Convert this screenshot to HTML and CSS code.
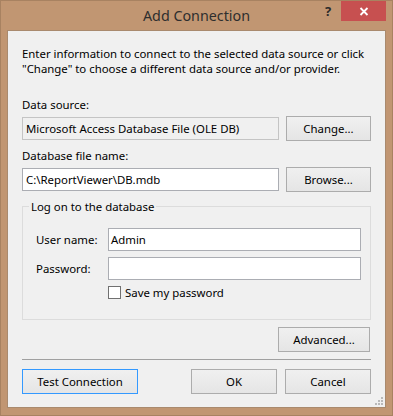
FILE: index.html
```html
<!DOCTYPE html>
<html lang="en">
<head>
  <meta charset="UTF-8">
  <title>Add Connection</title>
  <link rel="stylesheet" href="styles.css">
</head>
<body>
  <div class="window">
    <div class="titlebar">
      <span></span>
      <span class="title">Add Connection</span>
      <div class="caption-buttons">
        <span class="help">?</span>
        <span class="close">
          <svg width="10" height="9" viewBox="0 0 10 9">
            <path d="M1.5 1 L8.5 8 M8.5 1 L1.5 8" stroke="#fff" stroke-width="1.8" fill="none"/>
          </svg>
        </span>
      </div>
    </div>

    <div class="client">
      <p class="intro">Enter information to connect to the selected data source or click<br>"Change" to choose a different data source and/or provider.</p>

      <div class="label first">Data source:</div>
      <div class="row">
        <div class="textbox readonly">Microsoft Access Database File (OLE DB)</div>
        <button class="btn">Change...</button>
      </div>

      <div class="label">Database file name:</div>
      <div class="row">
        <div class="textbox">C:\ReportViewer\DB.mdb</div>
        <button class="btn">Browse...</button>
      </div>

      <fieldset class="group">
        <legend>Log on to the database</legend>
        <div class="field">
          <span class="field-name">User name:</span>
          <div class="textbox wide">Admin</div>
        </div>
        <div class="field">
          <span class="field-name">Password:</span>
          <div class="textbox wide"></div>
        </div>
        <label class="check">
          <span class="box"></span>
          <span>Save my password</span>
        </label>
      </fieldset>

      <button class="btn advanced">Advanced...</button>

      <div class="separator"></div>

      <div class="footer">
        <button class="btn default">Test Connection</button>
        <div class="footer-right">
          <button class="btn">OK</button>
          <button class="btn">Cancel</button>
        </div>
      </div>

      <svg class="grip" width="8" height="8" viewBox="0 0 8 8">
        <rect x="6" y="0" width="2" height="2" fill="#b9b9b9"/>
        <rect x="3" y="3" width="2" height="2" fill="#b9b9b9"/>
        <rect x="6" y="3" width="2" height="2" fill="#b9b9b9"/>
        <rect x="0" y="6" width="2" height="2" fill="#b9b9b9"/>
        <rect x="3" y="6" width="2" height="2" fill="#b9b9b9"/>
        <rect x="6" y="6" width="2" height="2" fill="#b9b9b9"/>
      </svg>
    </div>
  </div>
</body>
</html>
```

FILE: styles.css
```css
body {
  margin: 0;
  font-family: 'Noto Sans', sans-serif;
  font-size: 11.4px;
  color: #000;
}

.window {
  box-sizing: border-box;
  width: 393px;
  height: 416px;
  border: 1px solid #a88261;
  background: #c19672;
  padding: 0 6px 7px 6px;
  display: flex;
  flex-direction: column;
}

/* Title bar */
.titlebar {
  height: 29px;
  display: grid;
  grid-template-columns: 1fr auto 1fr;
}

.title {
  font-size: 14.3px;
  line-height: 29px;
  color: #2e2e2e;
}

.caption-buttons {
  display: flex;
  justify-content: flex-end;
  align-items: flex-start;
}

.help {
  width: 14px;
  margin-right: 6px;
  text-align: center;
  font-weight: 700;
  font-size: 13px;
  line-height: 20px;
  color: #2b2b2b;
}

.close {
  width: 45px;
  height: 20px;
  background: #c75050;
  display: flex;
  align-items: center;
  justify-content: center;
}

/* Client area */
.client {
  flex: 1;
  position: relative;
  background: #f0f0f0;
  border: 1px solid #a98a6e;
  padding: 15px 14px 0 14px;
  display: flex;
  flex-direction: column;
}

.intro {
  margin: 0;
  line-height: 15px;
}

.label {
  line-height: 15px;
  margin-top: 7px;
}

.label.first {
  margin-top: 21px;
}

.row {
  display: flex;
  align-items: center;
  justify-content: space-between;
  margin-top: 4px;
}

.textbox {
  box-sizing: border-box;
  width: 257px;
  height: 23px;
  border: 1px solid #abadb3;
  background: #fff;
  padding: 0 3px;
  line-height: 21px;
  white-space: nowrap;
}

.textbox.readonly {
  background: #f0f0f0;
  border-color: #c4c4c4;
}

.btn {
  box-sizing: border-box;
  width: 85px;
  height: 25px;
  border: 1px solid #acacac;
  background: linear-gradient(#f0f0f0, #e5e5e5);
  font-family: inherit;
  font-size: inherit;
  color: #000;
  padding: 0;
}

/* Group box */
.group {
  margin: 7px 0 0 0;
  border: 1px solid #dcdcdc;
  padding: 14px 9px 19px 13px;
}

.group legend {
  margin-left: -7px;
  padding: 0 2px;
  line-height: 15px;
}

.field {
  display: flex;
  align-items: center;
  margin-top: 6px;
}

.field:first-of-type {
  margin-top: 0;
}

.field-name {
  width: 72px;
}

.textbox.wide {
  flex: 1;
  width: auto;
  padding-left: 2px;
}

.check {
  display: flex;
  align-items: center;
  margin: 5px 0 0 72px;
  line-height: 15px;
}

.check .box {
  box-sizing: border-box;
  width: 13px;
  height: 13px;
  border: 1px solid #707070;
  background: #fff;
  margin-right: 4px;
}

.advanced {
  align-self: flex-end;
  width: 92px;
  margin: 7px 1px 0 0;
}

.separator {
  height: 1px;
  background: #a0a0a0;
  margin-top: 7px;
}

.footer {
  display: flex;
  justify-content: space-between;
  margin-top: 9px;
}

.footer .btn {
  width: 86px;
}

.footer .btn.default {
  width: 116px;
  border-color: #3399ff;
}

.footer-right {
  display: flex;
  gap: 8px;
}

.grip {
  position: absolute;
  right: 2px;
  bottom: 2px;
}
```
